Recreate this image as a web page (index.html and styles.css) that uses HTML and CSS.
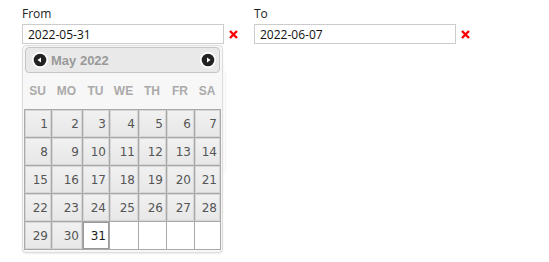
FILE: index.html
```html
<!DOCTYPE html>
<html lang="en">
<head>
    <meta charset="UTF-8">
    <meta name="viewport" content="width=device-width, initial-scale=1.0">
    <title>Date Range</title>
    <link rel="stylesheet" href="styles.css">
</head>
<body>
    <div class="range">
        <div class="field">
            <label for="date-from">From</label>
            <div class="control">
                <input type="text" id="date-from" value="2022-05-31">
                <button class="clear" title="Clear">
                    <svg width="9" height="9" viewBox="0 0 9 9"><path d="M1 1L8 8M8 1L1 8" stroke="#f00" stroke-width="2.4" stroke-linecap="butt"/></svg>
                </button>
            </div>

            <div class="datepicker">
                <div class="dp-header">
                    <span class="dp-nav">
                        <svg width="16" height="16" viewBox="0 0 16 16"><circle cx="8" cy="8" r="8" fill="#fff"/><circle cx="8" cy="8" r="6.3" fill="#222"/><path d="M5.5 8L9 5.5V10.5Z" fill="#fff"/></svg>
                    </span>
                    <span class="dp-title">May 2022</span>
                    <span class="dp-nav dp-next">
                        <svg width="16" height="16" viewBox="0 0 16 16"><circle cx="8" cy="8" r="8" fill="#fff"/><circle cx="8" cy="8" r="6.3" fill="#222"/><path d="M10.5 8L7 5.5V10.5Z" fill="#fff"/></svg>
                    </span>
                </div>
                <div class="dp-weekdays">
                    <span>SU</span><span>MO</span><span>TU</span><span>WE</span><span>TH</span><span>FR</span><span>SA</span>
                </div>
                <div class="dp-days">
                    <a class="day">1</a><a class="day">2</a><a class="day">3</a><a class="day">4</a><a class="day">5</a><a class="day">6</a><a class="day">7</a>
                    <a class="day">8</a><a class="day">9</a><a class="day">10</a><a class="day">11</a><a class="day">12</a><a class="day">13</a><a class="day">14</a>
                    <a class="day">15</a><a class="day">16</a><a class="day">17</a><a class="day">18</a><a class="day">19</a><a class="day">20</a><a class="day">21</a>
                    <a class="day">22</a><a class="day">23</a><a class="day">24</a><a class="day">25</a><a class="day">26</a><a class="day">27</a><a class="day">28</a>
                    <a class="day">29</a><a class="day">30</a><a class="day active">31</a><span class="empty"></span><span class="empty"></span><span class="empty"></span><span class="empty"></span>
                </div>
            </div>
        </div>

        <div class="field">
            <label for="date-to">To</label>
            <div class="control">
                <input type="text" id="date-to" value="2022-06-07">
                <button class="clear" title="Clear">
                    <svg width="9" height="9" viewBox="0 0 9 9"><path d="M1 1L8 8M8 1L1 8" stroke="#f00" stroke-width="2.4" stroke-linecap="butt"/></svg>
                </button>
            </div>
        </div>
    </div>
</body>
</html>
```

FILE: styles.css
```css
body {
    margin: 0;
    padding: 6px 22px;
    font-family: "Open Sans", Arial, sans-serif;
    font-size: 12px;
    color: #222;
    background: #fff;
}
.range {
    display: flex;
    align-items: flex-start;
    gap: 16px;
}
label {
    display: block;
    line-height: 16px;
    margin-bottom: 2px;
    color: #222;
}
.control {
    display: flex;
    align-items: center;
    gap: 5px;
}
input[type="text"] {
    box-sizing: border-box;
    width: 202px;
    height: 20px;
    margin: 0;
    padding: 0 5px;
    border: 1px solid #ccc;
    font-family: "Open Sans", Arial, sans-serif;
    font-size: 12px;
    color: #111;
    outline: none;
}
.clear {
    display: flex;
    width: 9px;
    height: 9px;
    padding: 0;
    border: none;
    background: none;
    cursor: pointer;
}
.datepicker {
    position: relative;
    box-sizing: border-box;
    width: 201px;
    margin-top: 1px;
    padding: 1px 2px 2px;
    border: 1px solid #ddd;
    border-radius: 4px;
    background: #f7f7f7;
    box-shadow: 0 1px 2px rgba(0, 0, 0, 0.08);
}
.datepicker::before {
    content: "";
    position: absolute;
    top: 26px;
    bottom: 80px;
    left: 4px;
    right: -3px;
    z-index: -1;
    background: #fcfcfc;
    box-shadow: 0 0 2px rgba(0, 0, 0, 0.12);
}
.dp-header {
    display: flex;
    align-items: center;
    height: 26px;
    box-sizing: border-box;
    padding: 0 3px 0 6px;
    border: 1px solid #c5c5c5;
    border-radius: 4px;
    background: #e9e9e9;
}
.dp-nav {
    display: flex;
    width: 16px;
    height: 16px;
}
.dp-next {
    margin-left: auto;
}
.dp-title {
    margin-left: 3px;
    font-family: "Liberation Sans", Arial, sans-serif;
    font-weight: bold;
    font-size: 13px;
    color: #999;
}
.dp-weekdays,
.dp-days {
    display: grid;
    grid-template-columns: 27px 31px 27px 29px 28px 28px 26px;
    margin-left: -1px;
}
.dp-weekdays {
    height: 36px;
    align-items: center;
    font-family: "Liberation Sans", Arial, sans-serif;
    font-weight: bold;
    font-size: 12px;
    color: #aaa;
    text-align: center;
}
.dp-days {
    grid-auto-rows: 28px;
    width: max-content;
    border-right: 1px solid #a9a9a9;
    border-bottom: 1px solid #a9a9a9;
    background: #fff;
}
.day,
.empty {
    box-sizing: border-box;
    border-left: 1px solid #a9a9a9;
    border-top: 1px solid #a9a9a9;
}
.day {
    display: flex;
    align-items: center;
    justify-content: flex-end;
    padding-right: 3px;
    font-family: "DejaVu Sans", Verdana, sans-serif;
    font-size: 12px;
    color: #555;
    background: linear-gradient(#f1f1f1, #e7e7e7);
    box-shadow: inset 0 0 0 1px #d6d6d6;
    cursor: pointer;
}
.day.active {
    background: #fff;
    color: #1a1a1a;
    box-shadow: inset 0 0 0 1px #999;
}
```
